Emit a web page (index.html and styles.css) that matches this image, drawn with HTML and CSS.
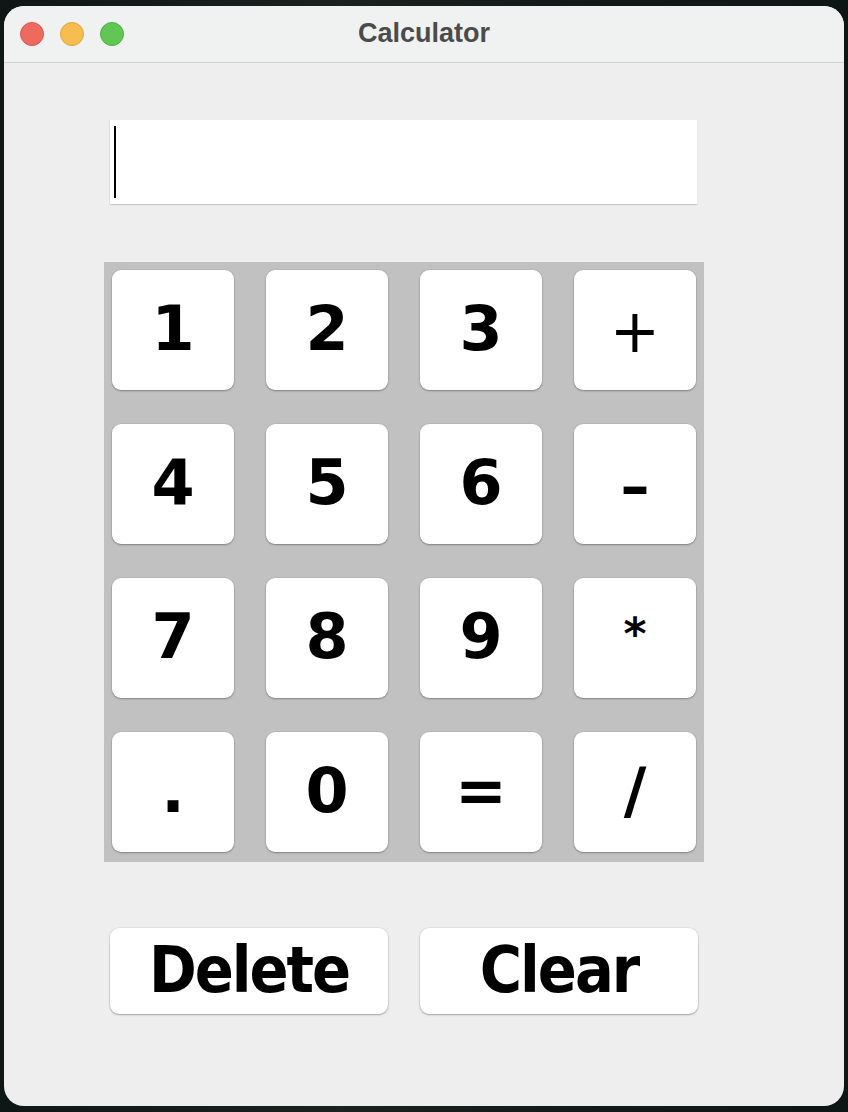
FILE: index.html
```html
<!DOCTYPE html>
<html>
<head>
<meta charset="utf-8">
<title>Calculator</title>
<link rel="stylesheet" href="styles.css">
</head>
<body>
<div class="window">
  <div class="titlebar">
    <div class="lights">
      <span class="light red"></span>
      <span class="light yellow"></span>
      <span class="light green"></span>
    </div>
    <div class="title">Calculator</div>
  </div>
  <div class="content">
    <div class="display"><span class="caret"></span></div>
    <div class="pad">
      <div class="key">1</div>
      <div class="key">2</div>
      <div class="key">3</div>
      <div class="key plus">+</div>
      <div class="key">4</div>
      <div class="key">5</div>
      <div class="key">6</div>
      <div class="key minus">–</div>
      <div class="key">7</div>
      <div class="key">8</div>
      <div class="key">9</div>
      <div class="key star">*</div>
      <div class="key">.</div>
      <div class="key">0</div>
      <div class="key">=</div>
      <div class="key">/</div>
    </div>
    <div class="actions">
      <div class="action">Delete</div>
      <div class="action">Clear</div>
    </div>
  </div>
</div>
</body>
</html>
```

FILE: styles.css
```css
html, body {
  margin: 0;
  padding: 0;
}
body {
  width: 848px;
  height: 1112px;
  background: linear-gradient(90deg, #0e1716 0%, #1a2220 40%, #121a19 70%, #0d1515 100%);
  padding: 6px 4px;
  box-sizing: border-box;
  overflow: hidden;
}
.window {
  width: 840px;
  height: 1100px;
  background: #eeeeee;
  border-radius: 20px;
  overflow: hidden;
  display: flex;
  flex-direction: column;
}
.titlebar {
  height: 56px;
  flex: none;
  background: #f0f1f1;
  border-bottom: 1px solid #d2d2d2;
  display: flex;
  align-items: center;
  position: relative;
}
.lights {
  display: flex;
  gap: 16px;
  padding-left: 16px;
}
.light {
  width: 24px;
  height: 24px;
  border-radius: 50%;
  box-sizing: border-box;
}
.red { background: #ee6a5f; border: 1px solid #d9584e; }
.yellow { background: #f6be50; border: 1px solid #dea43a; }
.green { background: #62c655; border: 1px solid #50ae44; }
.title {
  position: absolute;
  left: 0;
  right: 0;
  top: 0;
  bottom: 2px;
  display: flex;
  align-items: center;
  justify-content: center;
  font-family: "Liberation Sans", Arial, sans-serif;
  font-weight: bold;
  font-size: 27px;
  color: #4b4b4b;
}
.content {
  padding: 57px 0 0 100px;
  display: flex;
  flex-direction: column;
  align-items: flex-start;
}
.display {
  margin-left: 6px;
  width: 587px;
  height: 84px;
  background: #ffffff;
  box-shadow: 0 1px 1px rgba(0,0,0,0.15), -1px 0 0 rgba(0,0,0,0.03);
  display: flex;
  align-items: center;
  padding-left: 4px;
  box-sizing: border-box;
}
.caret {
  width: 2px;
  height: 72px;
  background: #000;
}
.pad {
  margin-top: 58px;
  width: 600px;
  height: 600px;
  box-sizing: border-box;
  background: #c1c1c1;
  padding: 8px 8px 10px 8px;
  display: grid;
  grid-template-columns: repeat(4, 122px);
  grid-template-rows: repeat(4, 120px);
  column-gap: 32px;
  row-gap: 34px;
}
.key {
  background: #ffffff;
  border-radius: 9px;
  box-shadow: 0 1px 2px rgba(0,0,0,0.3), 0 0 0 0.5px rgba(0,0,0,0.08);
  display: flex;
  align-items: center;
  justify-content: center;
  font-family: "DejaVu Sans", sans-serif;
  font-weight: bold;
  font-size: 62px;
  color: #000;
  padding-bottom: 4px;
  box-sizing: border-box;
}
.plus {
  font-weight: normal;
  font-size: 60px;
  padding-bottom: 0;
  padding-top: 2px;
}
.minus {
  font-weight: 600;
  font-size: 58px;
  padding-bottom: 0;
  padding-top: 4px;
}
.star {
  align-items: flex-start;
  padding-top: 30px;
  font-size: 44px;
}
.actions {
  margin-top: 66px;
  margin-left: 6px;
  display: flex;
  gap: 32px;
}
.action {
  width: 278px;
  height: 86px;
  background: #ffffff;
  border-radius: 9px;
  box-shadow: 0 1px 2px rgba(0,0,0,0.3), 0 0 0 0.5px rgba(0,0,0,0.08);
  display: flex;
  align-items: center;
  justify-content: center;
  font-family: "DejaVu Sans Condensed", "DejaVu Sans", sans-serif;
  font-weight: bold;
  font-size: 64px;
  letter-spacing: -2px;
  color: #000;
  padding-bottom: 2px;
  box-sizing: border-box;
}
```
